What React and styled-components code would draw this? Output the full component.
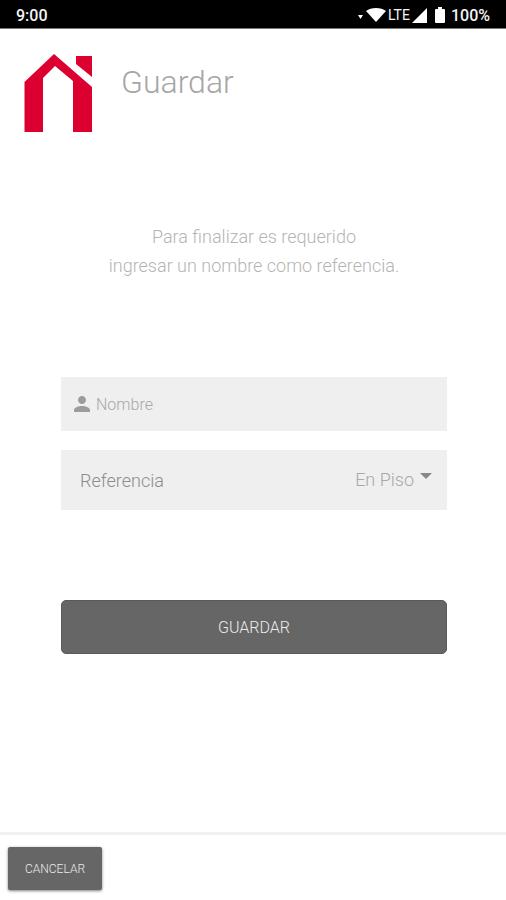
import styled, { createGlobalStyle } from "styled-components";
import { MdPerson } from "react-icons/md";

const GlobalStyle = createGlobalStyle`
*{
box-sizing:border-box;
}
body{
margin:0;
background:#fff;
font-family:Roboto, "Open Sans", sans-serif;
font-weight:300;
}
`;

const Screen = styled.div`
display:flex;
flex-direction:column;
min-height:100vh;
`;

const StatusBar = styled.div`
display:flex;
justify-content:space-between;
align-items:center;
height:29px;
padding:2px 16px 0;
background:#000;
border-bottom:1px solid #777;
color:#f4f4f4;
font-size:16px;
font-weight:500;
`;

const StatusIcons = styled.div`
display:flex;
align-items:center;
gap:2px;
`;

const Network = styled.span`
font-size:14px;
font-weight:400;
`;

const Header = styled.header`
display:flex;
align-items:flex-start;
gap:28px;
padding:25px 24px 0;
`;

const Title = styled.h1`
margin:8px 0 0;
color:#a6a6a6;
font-size:32px;
font-weight:300;
line-height:40px;
`;

const Content = styled.main`
flex:1;
display:flex;
flex-direction:column;
padding:90px 59px 0 61px;
`;

const Message = styled.p`
margin:0;
color:#b4b4b4;
font-size:18px;
line-height:29px;
text-align:center;
`;

const Form = styled.form`
display:flex;
flex-direction:column;
gap:19px;
margin-top:97px;
`;

const NameField = styled.label`
display:flex;
align-items:center;
gap:2px;
height:54px;
padding:0 9px;
background:#efefef;
color:#9c9c9c;
`;

const NameInput = styled.input`
flex:1;
min-width:0;
padding:0;
border:none;
outline:none;
background:transparent;
color:#777;
font-family:inherit;
font-size:16px;
font-weight:300;
&::placeholder{
color:#a8a8a8;
opacity:1;
}
`;

const SelectField = styled.div`
display:flex;
align-items:center;
justify-content:space-between;
height:60px;
padding:0 15px 0 19px;
background:#efefef;
color:#8c8c8c;
font-size:18px;
`;

const SelectBox = styled.div`
position:relative;
display:flex;
`;

const Select = styled.select`
appearance:none;
padding:0 18px 0 0;
border:none;
outline:none;
background:transparent;
color:#a8a8a8;
font-family:inherit;
font-size:18px;
font-weight:300;
line-height:24px;
text-align-last:right;
cursor:pointer;
`;

const Arrow = styled.svg`
position:absolute;
top:5px;
right:0;
pointer-events:none;
`;

const SaveBtn = styled.button`
height:54px;
margin-top:71px;
border:1px solid #5a5a5a;
border-radius:5px;
background:#666;
color:#ececec;
font-family:inherit;
font-size:16px;
font-weight:300;
cursor:pointer;
`;

const Footer = styled.footer`
height:68px;
padding:12px 8px;
border-top:3px solid #f1f1f1;
`;

const CancelBtn = styled.button`
width:94px;
height:43px;
padding:0;
border:none;
border-radius:2px;
background:#666;
box-shadow:0 1px 3px rgba(0,0,0,0.5);
color:#ececec;
font-family:inherit;
font-size:12px;
font-weight:300;
cursor:pointer;
`;

function Logo() {
  return (
    <svg width="69" height="78" viewBox="0 0 69 78" fill="#dc0030" aria-hidden="true">
      <path d="M30 0L68 33V78H49V27L31 12L19 24V78H0.500V28Z" />
      <path d="M52 2H68V23L52 10Z" />
    </svg>
  )
}

function Status() {
  return (
    <StatusBar>
      <span>9:00</span>
      <StatusIcons>
        <svg width="28" height="16" viewBox="0 0 28 16" fill="#fff" aria-hidden="true">
          <path d="M0 8H5L2.500 12Z" />
          <path d="M8 4C13 0 23 0 28 4L18 15Z" />
        </svg>
        <Network>LTE</Network>
        <svg width="15" height="15" viewBox="0 0 15 15" fill="#fff" aria-hidden="true">
          <path d="M15 0V15H0Z" />
        </svg>
        <svg width="20" height="16" viewBox="0 0 20 16" fill="#fff" aria-hidden="true">
          <path d="M9 0H13V2H15Q16 2 16 3V15Q16 16 15 16H7Q6 16 6 15V3Q6 2 7 2H9Z" />
        </svg>
        <span>100%</span>
      </StatusIcons>
    </StatusBar>
  )
}

function App() {
  return (
    <Screen>
      <GlobalStyle />
      <Status />

      <Header>
        <Logo />
        <Title>Guardar</Title>
      </Header>

      <Content>
        <Message>
          Para finalizar es requerido
          <br />
          ingresar un nombre como referencia.
        </Message>

        <Form onSubmit={(e) => e.preventDefault()}>
          <NameField>
            <MdPerson size={24} />
            <NameInput type="text" placeholder="Nombre" aria-label="Nombre" />
          </NameField>
          <SelectField>
            <label htmlFor="referencia">Referencia</label>
            <SelectBox>
              <Select id="referencia" defaultValue="piso">
                <option value="piso">En Piso</option>
              </Select>
              <Arrow width="12" height="6" viewBox="0 0 12 6" fill="#888">
                <path d="M0 0H12L6 6Z" />
              </Arrow>
            </SelectBox>
          </SelectField>
          <SaveBtn type="submit">GUARDAR</SaveBtn>
        </Form>
      </Content>

      <Footer>
        <CancelBtn type="button">CANCELAR</CancelBtn>
      </Footer>
    </Screen>
  )
}

export default App;
